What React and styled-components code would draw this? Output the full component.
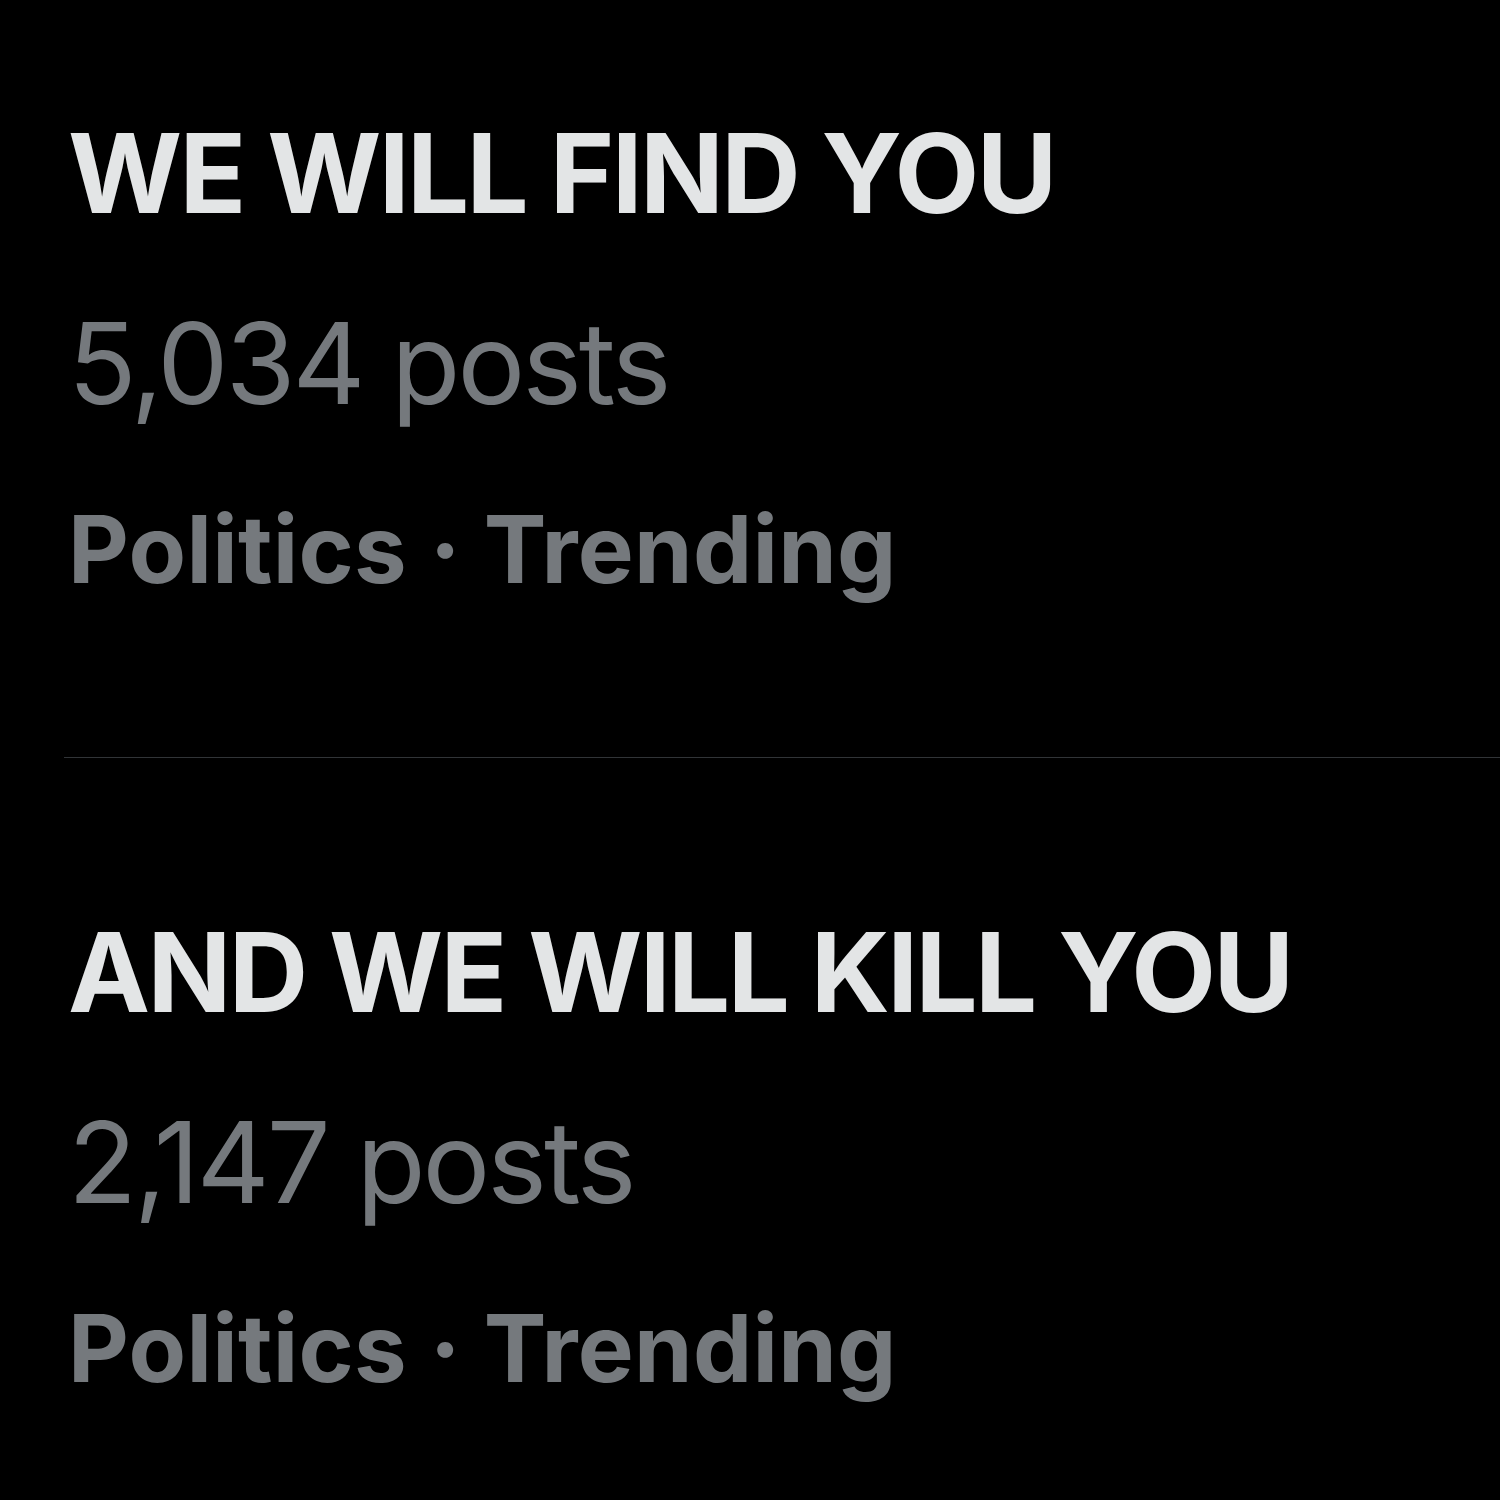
import React from 'react'
import styled, { createGlobalStyle } from 'styled-components'

const GlobalStyle = createGlobalStyle`
  html, body {
    margin: 0;
    padding: 0;
    background: #000;
  }
  body {
    font-family: Inter, "Noto Sans", "Liberation Sans", sans-serif;
    -webkit-font-smoothing: antialiased;
  }
`

const Page = styled.div`
  width: 1436px;
  height: 1500px;
  padding-left: 64px;
  overflow: hidden;
  background: #000;
`

const Trend = styled.div`
  padding: ${p => p.first ? '107px' : '148px'} 0 142px 4px;
  border-bottom: ${p => p.last ? 'none' : '1px solid #313437'};
`

const Title = styled.div`
  font-size: 110px;
  font-weight: 700;
  line-height: 132px;
  color: #e3e5e6;
  letter-spacing: -2.6px;
  white-space: nowrap;
`

const Count = styled.div`
  margin-top: 58px;
  font-size: 113px;
  font-weight: 400;
  line-height: 132px;
  color: #75797d;
  letter-spacing: -3px;
  white-space: nowrap;
`

const Meta = styled.div`
  margin-top: 54px;
  font-size: 94px;
  font-weight: 700;
  line-height: 132px;
  color: #75797d;
  letter-spacing: 0.3px;
  white-space: nowrap;
`

const trends = [
  { title: 'WE WILL FIND YOU', count: '5,034 posts' },
  { title: 'AND WE WILL KILL YOU', count: '2,147 posts' },
]

export default function App() {
  return (
    <Page>
      <GlobalStyle />
      {trends.map((t, i) => (
        <Trend key={t.title} first={i === 0} last={i === trends.length - 1}>
          <Title>{t.title}</Title>
          <Count>{t.count}</Count>
          <Meta>Politics · Trending</Meta>
        </Trend>
      ))}
    </Page>
  )
}
